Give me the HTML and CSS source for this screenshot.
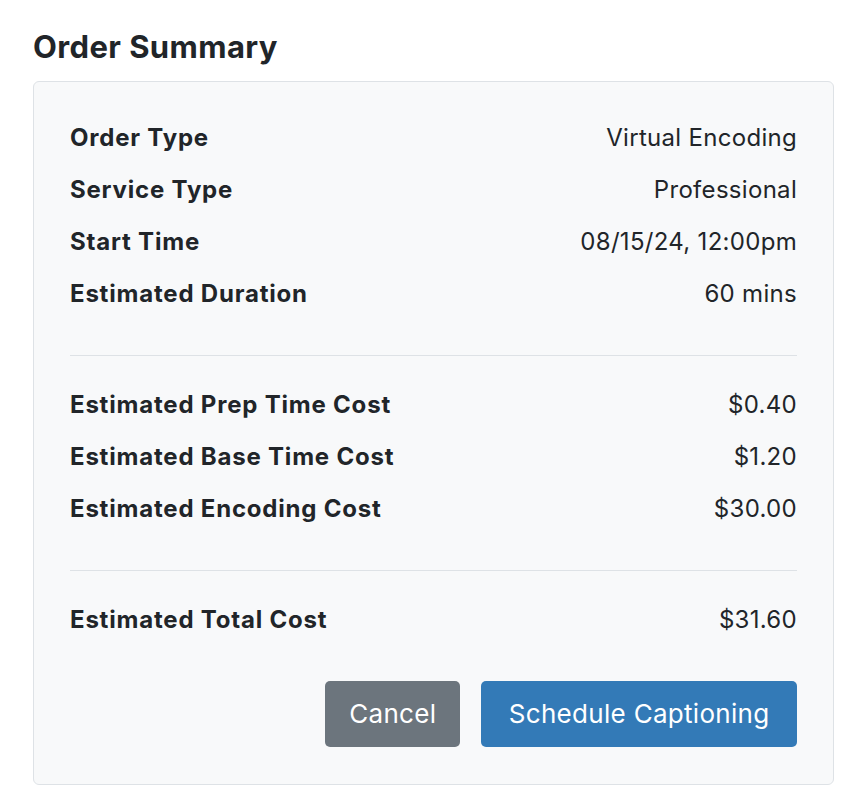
FILE: index.html
```html
<!DOCTYPE html>
<html>
<head>
<meta charset="utf-8">
<link rel="stylesheet" href="styles.css">
</head>
<body>
<div class="wrap">
  <h2 class="title">Order Summary</h2>
  <div class="card">
    <div class="group">
      <div class="row"><span class="label">Order Type</span><span class="value">Virtual Encoding</span></div>
      <div class="row"><span class="label">Service Type</span><span class="value">Professional</span></div>
      <div class="row"><span class="label">Start Time</span><span class="value">08/15/24, 12:00pm</span></div>
      <div class="row"><span class="label">Estimated Duration</span><span class="value">60 mins</span></div>
    </div>
    <hr class="divider">
    <div class="group">
      <div class="row"><span class="label">Estimated Prep Time Cost</span><span class="value">$0.40</span></div>
      <div class="row"><span class="label">Estimated Base Time Cost</span><span class="value">$1.20</span></div>
      <div class="row"><span class="label">Estimated Encoding Cost</span><span class="value">$30.00</span></div>
    </div>
    <hr class="divider">
    <div class="group">
      <div class="row"><span class="label">Estimated Total Cost</span><span class="value">$31.60</span></div>
    </div>
    <div class="actions">
      <button class="btn btn-secondary">Cancel</button>
      <button class="btn btn-primary">Schedule Captioning</button>
    </div>
  </div>
</div>
</body>
</html>
```
FILE: styles.css
```css
* { box-sizing: border-box; }
body {
  margin: 0;
  font-family: Inter, "Noto Sans", sans-serif;
  color: #212529;
  background: #fff;
}
.wrap {
  width: 801px;
  margin-left: 33px;
  padding-top: 29px;
}
.title {
  margin: 0 0 16px 0;
  font-size: 31px;
  font-weight: 700;
  line-height: 36px;
  letter-spacing: 0.4px;
}
.card {
  background: #f8f9fa;
  border: 1px solid #dee2e6;
  border-radius: 6px;
  padding: 39px 36px 37px 36px;
}
.group {
  display: flex;
  flex-direction: column;
  gap: 19px;
}
.row {
  display: flex;
  justify-content: space-between;
  font-size: 24px;
  line-height: 33px;
}
.label { font-weight: 700; letter-spacing: 0.8px; }
.value { font-weight: 400; letter-spacing: 0.3px; }
.divider {
  border: 0;
  border-top: 1px solid #dee2e6;
  margin: 45px 0 32px 0;
}
.actions {
  display: flex;
  justify-content: flex-end;
  gap: 21px;
  margin-top: 45px;
}
.btn {
  font-family: inherit;
  font-size: 26px;
  letter-spacing: 0.3px;
  line-height: 36px;
  padding: 15px 27.5px;
  border: 0;
  border-radius: 5px;
  color: #fff;
}
.btn-secondary { background: #6c757d; padding-left: 24px; padding-right: 24px; }
.btn-primary { background: #337ab7; }
```
